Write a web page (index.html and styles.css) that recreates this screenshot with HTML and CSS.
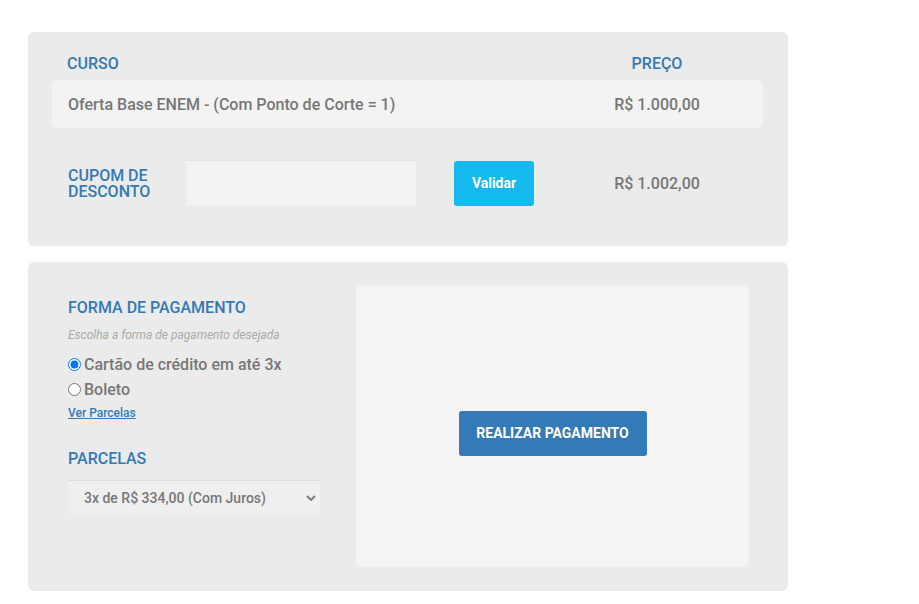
FILE: index.html
```html
<!DOCTYPE html>
<html lang="pt-BR">
  <head>
    <meta charset="UTF-8" />
    <meta name="viewport" content="width=device-width, initial-scale=1" />
    <title>Checkout</title>
    <link rel="stylesheet" href="styles.css">
  </head>
  <body>
    <div class="checkout">
      <section class="card resumo">
        <div class="cab">
          <span>CURSO</span>
          <span class="col-preco">PREÇO</span>
        </div>
        <div class="linha">
          <span>Oferta Base ENEM - (Com Ponto de Corte = 1)</span>
          <span class="col-preco">R$ 1.000,00</span>
        </div>
        <div class="cupom">
          <label for="cupom">CUPOM DE<br />DESCONTO</label>
          <input id="cupom" type="text" />
          <div><button class="btn-validar">Validar</button></div>
          <span class="col-preco">R$ 1.002,00</span>
        </div>
      </section>

      <section class="card pagamento">
        <div class="opcoes">
          <h2>FORMA DE PAGAMENTO</h2>
          <p class="dica">Escolha a forma de pagamento desejada</p>
          <label class="opcao"><input type="radio" name="forma" checked /> Cartão de crédito em até 3x</label>
          <label class="opcao"><input type="radio" name="forma" /> Boleto</label>
          <a href="#" class="ver">Ver Parcelas</a>

          <h2 class="parcelas">PARCELAS</h2>
          <select class="sel-parcelas">
            <option>3x de R$ 334,00 (Com Juros)</option>
            <option>2x de R$ 501,00 (Com Juros)</option>
            <option>1x de R$ 1.002,00</option>
          </select>
        </div>
        <div class="painel">
          <button class="btn-pagar">REALIZAR PAGAMENTO</button>
        </div>
      </section>
    </div>
  </body>
</html>
```

FILE: styles.css
```css
body {
  font-family: Roboto, "Liberation Sans", sans-serif;
  margin: 0;
  padding: 0;
  background: #fff;
  color: #777;
}

.checkout {
  width: 760px;
  padding: 32px 0 0 28px;
  display: flex;
  flex-direction: column;
  gap: 16px;
}

.card {
  background: #ebebeb;
  border-radius: 6px;
}

/* resumo do curso */

.resumo {
  padding: 20px 25px 40px 24px;
}

.cab,
.linha {
  display: grid;
  grid-template-columns: 1fr 200px;
  align-items: center;
  padding: 0 6px 0 15px;
}

.cab {
  height: 22px;
  margin-bottom: 6px;
  color: #337ab7;
  font-size: 16px;
  font-weight: 500;
}

.linha {
  height: 48px;
  padding-left: 16px;
  background: #f3f3f3;
  border-radius: 6px;
  font-size: 16px;
  font-weight: 500;
}

.col-preco {
  text-align: center;
}

.cupom {
  display: grid;
  grid-template-columns: 134px 230px 1fr 200px;
  align-items: center;
  margin-top: 32px;
  padding-right: 6px;
  font-size: 16px;
  font-weight: 500;
}

.cupom label {
  padding: 1px 0 0 16px;
  color: #337ab7;
  font-size: 16px;
  line-height: 16px;
}

.cupom input {
  box-sizing: border-box;
  height: 46px;
  width: 230px;
  border: none;
  border-top: 1px solid #e3e3e3;
  background: #f3f3f3;
  outline: none;
}

.btn-validar {
  margin-left: 38px;
  width: 80px;
  height: 45px;
  border: none;
  border-radius: 3px;
  background: #14b9ef;
  color: #fff;
  font-family: inherit;
  font-size: 14px;
  font-weight: 700;
}

/* forma de pagamento */

.pagamento {
  display: flex;
  gap: 36px;
  padding: 23px 39px 24px 40px;
}

.opcoes {
  width: 252px;
  padding-top: 13px;
}

.opcoes h2 {
  margin: 0;
  color: #337ab7;
  font-size: 16px;
  font-weight: 500;
  line-height: 20px;
}

.dica {
  margin: 9px 0 0;
  font-size: 12px;
  font-style: italic;
  line-height: 16px;
  color: #aaa;
}

.opcao {
  display: flex;
  align-items: center;
  gap: 3px;
  font-size: 16px;
  font-weight: 500;
  line-height: 25px;
}

.opcao:first-of-type {
  margin-top: 9px;
}

.opcao input {
  margin: 0;
  width: 13px;
  height: 13px;
}

.ver {
  display: inline-block;
  color: #337ab7;
  font-size: 12px;
  line-height: 16px;
  font-weight: 500;
}

.opcoes h2.parcelas {
  margin-top: 28px;
}

.sel-parcelas {
  display: block;
  width: 252px;
  height: 34px;
  margin-top: 11px;
  padding: 0 16px;
  appearance: none;
  border: none;
  border-top: 1px solid #dedede;
  border-radius: 0;
  background: #efefef url("data:image/svg+xml,%3Csvg xmlns='http://www.w3.org/2000/svg' width='10' height='6' viewBox='0 0 10 6'%3E%3Cpath d='M1 1l4 4 4-4' fill='none' stroke='%23777' stroke-width='1.8'/%3E%3C/svg%3E") no-repeat right 4px center;
  color: #777;
  font-family: inherit;
  font-size: 14px;
  font-weight: 500;
}

.painel {
  flex: 1;
  box-sizing: border-box;
  height: 282px;
  padding-top: 14px;
  display: flex;
  align-items: center;
  justify-content: center;
  background: #f4f4f4;
  border-radius: 6px;
}

.btn-pagar {
  width: 188px;
  height: 45px;
  border: none;
  border-radius: 3px;
  background: #337ab7;
  color: #fff;
  font-family: inherit;
  font-size: 14px;
  font-weight: 700;
}
```
